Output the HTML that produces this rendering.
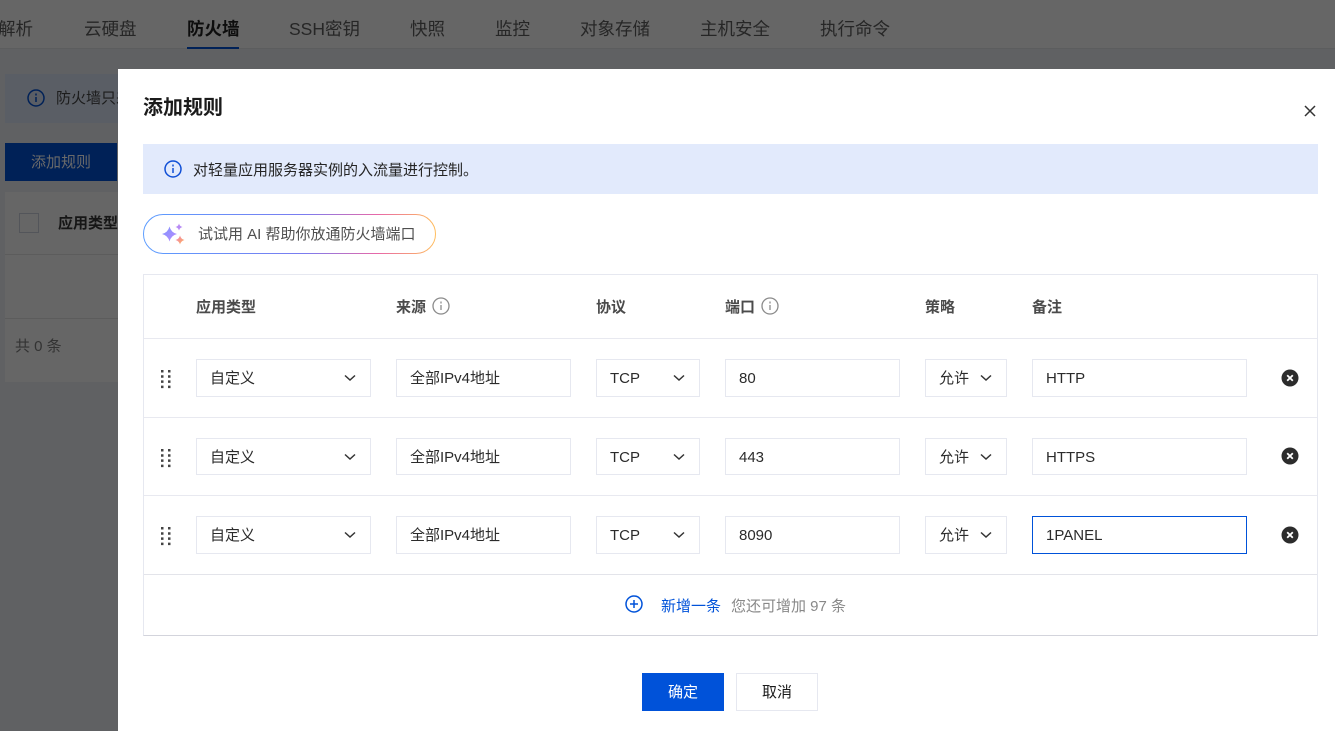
<!DOCTYPE html>
<html lang="zh"><head><meta charset="utf-8"><title>添加规则</title>
<style>
*{box-sizing:border-box}
html,body{margin:0;padding:0;width:1335px;height:731px;overflow:hidden;background:#606163}
body{position:relative;font-family:"Liberation Sans","Noto Sans CJK SC",sans-serif;font-size:15px;color:#1b1b1b}
.a{position:absolute;white-space:nowrap}
.t{position:absolute;white-space:nowrap;line-height:20px}
.n{position:absolute;white-space:nowrap;top:17px;font-size:17.5px;line-height:24px;color:#262626}
.box{position:absolute;height:38px;background:#fff;border:1px solid #e6e8f0}
.box span{position:absolute;left:13px;top:9px;line-height:20px;color:#2b2b2b;white-space:nowrap}
.box svg{position:absolute;top:11px}
.line{position:absolute;left:144px;width:1173px;height:1px;background:#e8e9f0}
.th{position:absolute;top:298px;line-height:20px;font-weight:700;color:#4b4b4b;white-space:nowrap}
</style></head><body>
<!-- background page -->
<div class="a" style="left:0;top:0;width:1335px;height:49px;background:#666;border-bottom:1px solid #5c5d5e"></div>
<div class="n" style="left:-2px">解析</div>
<div class="n" style="left:84px">云硬盘</div>
<div class="n" style="left:187px;color:#0d0d0d;font-weight:700">防火墙</div>
<div class="a" style="left:187px;top:47px;width:52px;height:2px;background:#002157"></div>
<div class="n" style="left:289px">SSH密钥</div>
<div class="n" style="left:410px">快照</div>
<div class="n" style="left:495px">监控</div>
<div class="n" style="left:580px">对象存储</div>
<div class="n" style="left:700px">主机安全</div>
<div class="n" style="left:820px">执行命令</div>

<div class="a" style="left:5px;top:74px;width:113px;height:49px;background:#5a5e65"></div>
<svg class="a" style="left:27px;top:89px" width="18" height="18" viewBox="0 0 18 18" fill="none" stroke="#002157" stroke-width="1.5"><circle cx="9" cy="9" r="8"/><path d="M9 8v5M9 4.5v2"/></svg>
<div class="t" style="left:56px;top:89px;color:#1c1c1c;width:62px;overflow:hidden">防火墙只差</div>
<div class="a" style="left:5px;top:143px;width:112px;height:38px;background:#002157"></div>
<div class="t" style="left:31px;top:153px;color:#6a6a6a">添加规则</div>
<div class="a" style="left:5px;top:192px;width:113px;height:190px;background:#666"></div>
<div class="a" style="left:5px;top:254px;width:113px;height:1px;background:#5c5c5c"></div>
<div class="a" style="left:5px;top:318px;width:113px;height:1px;background:#5c5c5c"></div>
<div class="a" style="left:19px;top:213px;width:20px;height:20px;border:1px solid #53555a"></div>
<div class="t" style="left:58px;top:214px;font-weight:700;color:#161616;width:60px;overflow:hidden">应用类型</div>
<div class="t" style="left:15px;top:337px;color:#333">共 0 条</div>

<!-- modal -->
<div class="a" style="left:118px;top:69px;width:1217px;height:662px;background:#fff"></div>
<div class="t" style="left:143px;top:94px;font-size:20px;line-height:28px;font-weight:700;color:#1b1b1b">添加规则</div>
<svg class="a" style="left:1304px;top:105px" width="12" height="12" viewBox="0 0 12 12" fill="none" stroke="#333" stroke-width="1.5"><path d="M1 1l10 10M11 1L1 11"/></svg>

<div class="a" style="left:143px;top:144px;width:1175px;height:50px;background:#e2eafc"></div>
<svg class="a" style="left:164px;top:160px" width="18" height="18" viewBox="0 0 18 18" fill="none" stroke="#0f4fd6" stroke-width="1.5"><circle cx="9" cy="9" r="8"/><path d="M9 8v5M9 4.5v2"/></svg>
<div class="t" style="left:193px;top:161px;color:#252525">对轻量应用服务器实例的入流量进行控制。</div>

<svg class="a" style="left:143px;top:214px" width="293" height="40" viewBox="0 0 293 40" fill="none">
<defs><linearGradient id="g" x1="0" y1="0" x2="293" y2="0" gradientUnits="userSpaceOnUse"><stop offset="0" stop-color="#5c9dff"/><stop offset=".55" stop-color="#7a7cf0"/><stop offset=".8" stop-color="#e868a8"/><stop offset="1" stop-color="#ffbe5c"/></linearGradient>
<linearGradient id="s" x1="0" y1="0" x2="1" y2="1"><stop offset="0" stop-color="#7f93ff"/><stop offset="1" stop-color="#b98cff"/></linearGradient>
<linearGradient id="p" x1="0" y1="0" x2="1" y2="1"><stop offset="0" stop-color="#f082c0"/><stop offset="1" stop-color="#ffb050"/></linearGradient></defs>
<rect x=".5" y=".5" width="292" height="39" rx="19.5" stroke="url(#g)"/>
<path d="M26.500 12.500Q28 18.500 34 20 28 21.500 26.500 27.500 25 21.500 19 20 25 18.500 26.500 12.500z" fill="url(#s)"/>
<path d="M36 9.500Q36.700 12.300 39.500 13 36.700 13.700 36 16.500 35.300 13.700 32.500 13 35.300 12.300 36 9.500z" fill="#b78af5"/>
<path d="M37 21.500Q37.900 25.100 41.500 26 37.900 26.900 37 30.500 36.100 26.900 32.500 26 36.100 25.100 37 21.500z" fill="url(#p)"/>
</svg>
<div class="t" style="left:198px;top:225px;color:#4f4f4f">试试用 AI 帮助你放通防火墙端口</div>

<!-- table -->
<div class="a" style="left:143px;top:274px;width:1175px;height:362px;border:1px solid #e6e8f0;border-bottom-color:#d3d4dc"></div>
<div class="line" style="top:338px"></div>
<div class="line" style="top:417px"></div>
<div class="line" style="top:495px"></div>
<div class="line" style="top:574px;background:#e3e4ea"></div>
<div class="th" style="left:196px">应用类型</div>
<div class="th" style="left:396px">来源</div>
<svg class="a" style="left:432px;top:297px" width="18" height="18" viewBox="0 0 18 18" fill="none" stroke="#8b8b8b" stroke-width="1.300"><circle cx="9" cy="9" r="8"/><path d="M9 8v5M9 4.500v2"/></svg>
<div class="th" style="left:596px">协议</div>
<div class="th" style="left:725px">端口</div>
<svg class="a" style="left:761px;top:297px" width="18" height="18" viewBox="0 0 18 18" fill="none" stroke="#8b8b8b" stroke-width="1.300"><circle cx="9" cy="9" r="8"/><path d="M9 8v5M9 4.500v2"/></svg>
<div class="th" style="left:925px">策略</div>
<div class="th" style="left:1032px">备注</div>

<!-- row 1 -->
<svg class="a" style="left:160px;top:369px" width="12" height="20" fill="#444"><path d="M1 1h2.500v2.500H1zM8 1h2.500v2.500H8zM1 6.200h2.500v2.500H1zM8 6.200h2.500v2.500H8zM1 11.400h2.500v2.500H1zM8 11.400h2.500v2.500H8zM1 16.600h2.500v2.500H1zM8 16.600h2.500v2.500H8z"/></svg>
<div class="box" style="left:196px;top:359px;width:175px"><span>自定义</span><svg style="left:146px" width="14" height="14" viewBox="0 0 14 14" fill="none" stroke="#333" stroke-width="1.500"><path d="M2 4.500L7 9l5-4.500"/></svg></div>
<div class="box" style="left:396px;top:359px;width:175px"><span>全部IPv4地址</span></div>
<div class="box" style="left:596px;top:359px;width:104px"><span>TCP</span><svg style="left:75px" width="14" height="14" viewBox="0 0 14 14" fill="none" stroke="#333" stroke-width="1.500"><path d="M2 4.500L7 9l5-4.500"/></svg></div>
<div class="box" style="left:725px;top:359px;width:175px"><span>80</span></div>
<div class="box" style="left:925px;top:359px;width:82px"><span>允许</span><svg style="left:53px" width="14" height="14" viewBox="0 0 14 14" fill="none" stroke="#333" stroke-width="1.500"><path d="M2 4.500L7 9l5-4.500"/></svg></div>
<div class="box" style="left:1032px;top:359px;width:215px"><span>HTTP</span></div>
<svg class="a" style="left:1281px;top:369px" width="18" height="18" viewBox="0 0 18 18"><circle cx="9" cy="9" r="8.500" fill="#2c2c2c"/><path d="M6.200 6.200l5.600 5.600M11.800 6.200l-5.600 5.600" stroke="#fff" stroke-width="1.800"/></svg>

<!-- row 2 -->
<svg class="a" style="left:160px;top:448px" width="12" height="20" fill="#444"><path d="M1 1h2.500v2.500H1zM8 1h2.500v2.500H8zM1 6.200h2.500v2.500H1zM8 6.200h2.500v2.500H8zM1 11.400h2.500v2.500H1zM8 11.400h2.500v2.500H8zM1 16.600h2.500v2.500H1zM8 16.600h2.500v2.500H8z"/></svg>
<div class="box" style="left:196px;top:438px;width:175px;height:37px"><span>自定义</span><svg style="left:146px" width="14" height="14" viewBox="0 0 14 14" fill="none" stroke="#333" stroke-width="1.500"><path d="M2 4.500L7 9l5-4.500"/></svg></div>
<div class="box" style="left:396px;top:438px;width:175px;height:37px"><span>全部IPv4地址</span></div>
<div class="box" style="left:596px;top:438px;width:104px;height:37px"><span>TCP</span><svg style="left:75px" width="14" height="14" viewBox="0 0 14 14" fill="none" stroke="#333" stroke-width="1.500"><path d="M2 4.500L7 9l5-4.500"/></svg></div>
<div class="box" style="left:725px;top:438px;width:175px;height:37px"><span>443</span></div>
<div class="box" style="left:925px;top:438px;width:82px;height:37px"><span>允许</span><svg style="left:53px" width="14" height="14" viewBox="0 0 14 14" fill="none" stroke="#333" stroke-width="1.500"><path d="M2 4.500L7 9l5-4.500"/></svg></div>
<div class="box" style="left:1032px;top:438px;width:215px;height:37px"><span>HTTPS</span></div>
<svg class="a" style="left:1281px;top:447px" width="18" height="18" viewBox="0 0 18 18"><circle cx="9" cy="9" r="8.500" fill="#2c2c2c"/><path d="M6.200 6.200l5.600 5.600M11.800 6.200l-5.600 5.600" stroke="#fff" stroke-width="1.800"/></svg>

<!-- row 3 -->
<svg class="a" style="left:160px;top:526px" width="12" height="20" fill="#444"><path d="M1 1h2.500v2.500H1zM8 1h2.500v2.500H8zM1 6.200h2.500v2.500H1zM8 6.200h2.500v2.500H8zM1 11.400h2.500v2.500H1zM8 11.400h2.500v2.500H8zM1 16.600h2.500v2.500H1zM8 16.600h2.500v2.500H8z"/></svg>
<div class="box" style="left:196px;top:516px;width:175px"><span>自定义</span><svg style="left:146px" width="14" height="14" viewBox="0 0 14 14" fill="none" stroke="#333" stroke-width="1.500"><path d="M2 4.500L7 9l5-4.500"/></svg></div>
<div class="box" style="left:396px;top:516px;width:175px"><span>全部IPv4地址</span></div>
<div class="box" style="left:596px;top:516px;width:104px"><span>TCP</span><svg style="left:75px" width="14" height="14" viewBox="0 0 14 14" fill="none" stroke="#333" stroke-width="1.500"><path d="M2 4.500L7 9l5-4.500"/></svg></div>
<div class="box" style="left:725px;top:516px;width:175px"><span>8090</span></div>
<div class="box" style="left:925px;top:516px;width:82px"><span>允许</span><svg style="left:53px" width="14" height="14" viewBox="0 0 14 14" fill="none" stroke="#333" stroke-width="1.500"><path d="M2 4.500L7 9l5-4.500"/></svg></div>
<div class="box" style="left:1032px;top:516px;width:215px;border-color:#0052d9"><span>1PANEL</span></div>
<svg class="a" style="left:1281px;top:526px" width="18" height="18" viewBox="0 0 18 18"><circle cx="9" cy="9" r="8.500" fill="#2c2c2c"/><path d="M6.200 6.200l5.600 5.600M11.800 6.200l-5.600 5.600" stroke="#fff" stroke-width="1.800"/></svg>

<!-- add -->
<svg class="a" style="left:625px;top:595px" width="18" height="18" viewBox="0 0 18 18" fill="none" stroke="#0052d9" stroke-width="1.500"><circle cx="9" cy="9" r="8"/><path d="M5 9h8M9 5v8"/></svg>
<div class="t" style="left:661px;top:597px;color:#0052d9">新增一条</div>
<div class="t" style="left:731px;top:597px;color:#888">您还可增加 97 条</div>

<!-- footer -->
<div class="a" style="left:642px;top:673px;width:82px;height:38px;background:#0052d9;color:#fff;text-align:center;line-height:40px">确定</div>
<div class="a" style="left:736px;top:673px;width:82px;height:38px;background:#fff;border:1px solid #e6e8f0;color:#1b1b1b;text-align:center;line-height:38px">取消</div>
</body></html>
